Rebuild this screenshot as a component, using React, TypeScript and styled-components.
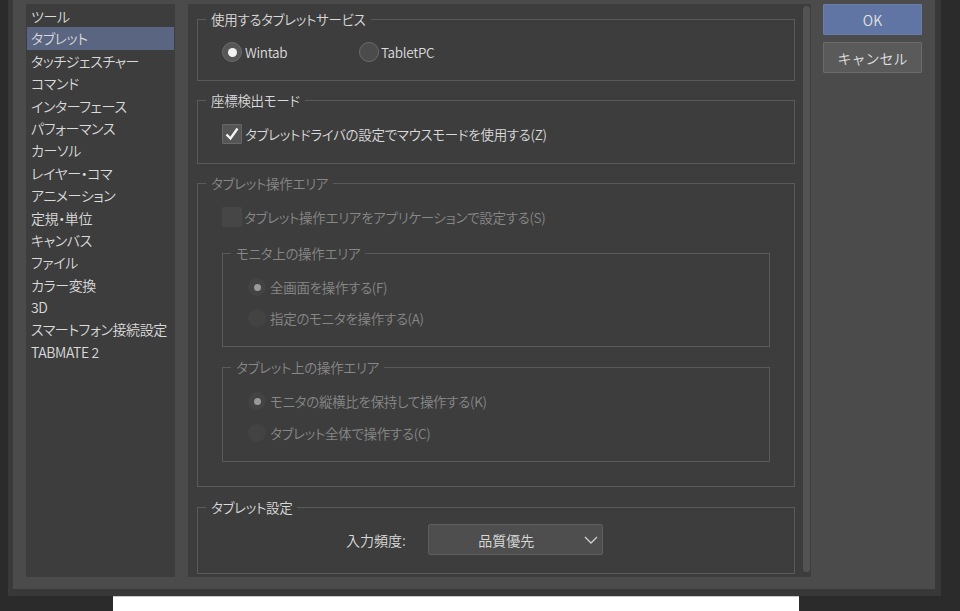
import React from "react";
import styled, { createGlobalStyle } from "styled-components";

const PANEL = "#3d3d3d";
const LINE = "#5a5a5a";
const TEXT = "#dadada";
const DIM = "#888888";

const Global = createGlobalStyle`
  html, body { margin: 0; padding: 0; background: #2b2b2b; overflow: hidden; }
  body {
    font-family: "Noto Sans CJK JP", "Noto Sans", sans-serif;
    font-feature-settings: "palt";
    font-weight: 350;
    -webkit-font-smoothing: antialiased;
  }
  * { box-sizing: border-box; }
`;

const Page = styled.div`
  width: 960px;
  height: 611px;
  display: flex;
  flex-direction: column;
`;

const Window = styled.div`
  margin-left: 8px;
  width: 933px;
  height: 596px;
  flex: none;
  background: #4b4b4b;
  border-left: 5px solid #3a3a3a;
  border-right: 6px solid #383838;
  border-bottom: 7px solid #383838;
  padding: 4px 13px 12px 13px;
  display: flex;
`;

const Sidebar = styled.ul`
  list-style: none;
  margin: 0;
  padding: 1px 0 0;
  width: 149px;
  flex: none;
  background: ${PANEL};
`;

const SideItem = styled.li<{ $active?: boolean }>`
  height: 22.4px;
  line-height: 22.4px;
  margin: 0 1px;
  padding-left: 4px;
  font-size: 14px;
  letter-spacing: -0.4px;
  color: ${TEXT};
  white-space: nowrap;
  background: ${(p) => (p.$active ? "#5a6581" : "transparent")};
`;

const Main = styled.div`
  margin-left: 13px;
  width: 623px;
  flex: none;
  background: ${PANEL};
  display: flex;
  padding: 0 1px 0 9px;
`;

const Content = styled.div`
  width: 598px;
  flex: none;
  padding-top: 15px;
  display: flex;
  flex-direction: column;
`;

const ScrollThumb = styled.div`
  margin: 2px 0 5px 8px;
  width: 7px;
  background: #535353;
  border-radius: 4px;
`;

const Group = styled.div<{ $h: number; $mt: number; $pl: number; $w?: number }>`
  border: 1px solid ${LINE};
  height: ${(p) => p.$h}px;
  margin-top: ${(p) => p.$mt}px;
  padding-left: ${(p) => p.$pl}px;
  width: ${(p) => (p.$w ? `${p.$w}px` : "auto")};
  flex: none;
  display: flex;
  flex-direction: column;
`;

const GroupTitle = styled.div<{ $disabled?: boolean }>`
  width: fit-content;
  margin: -10px 0 0 8px;
  padding: 0 5px;
  background: ${PANEL};
  font-size: 13.5px;
  letter-spacing: -0.3px;
  line-height: 18px;
  color: ${(p) => (p.$disabled ? DIM : TEXT)};
  white-space: nowrap;
`;

const TitleWrap = styled.div<{ $pl: number }>`
  margin-left: ${(p) => -p.$pl}px;
`;

const Row = styled.div<{ $mt: number }>`
  display: flex;
  align-items: center;
  margin-top: ${(p) => p.$mt}px;
  height: 20px;
`;

const Option = styled.label<{ $w?: number; $gap: number; $disabled?: boolean }>`
  display: flex;
  align-items: center;
  gap: ${(p) => p.$gap}px;
  width: ${(p) => (p.$w ? `${p.$w}px` : "auto")};
  font-size: 13.5px;
  letter-spacing: -0.3px;
  color: ${(p) => (p.$disabled ? DIM : TEXT)};
  white-space: nowrap;
`;

const RadioCircle = styled.span<{ $size: number; $checked?: boolean; $disabled?: boolean }>`
  width: ${(p) => p.$size}px;
  height: ${(p) => p.$size}px;
  border-radius: 50%;
  flex: none;
  display: flex;
  align-items: center;
  justify-content: center;
  background: ${(p) => (p.$disabled ? "#434343" : p.$checked ? "#575757" : "#4b4b4b")};
  border: 1px solid ${(p) => (p.$disabled ? "#434343" : "#6a6a6a")};
  &::after {
    content: "";
    display: ${(p) => (p.$checked ? "block" : "none")};
    width: ${(p) => (p.$disabled ? 7 : 9)}px;
    height: ${(p) => (p.$disabled ? 7 : 9)}px;
    border-radius: 50%;
    background: ${(p) => (p.$disabled ? "#999" : "#f2f2f2")};
  }
`;

const CheckBox = styled.span<{ $disabled?: boolean }>`
  width: 20px;
  height: 20px;
  flex: none;
  display: flex;
  align-items: center;
  justify-content: center;
  background: ${(p) => (p.$disabled ? "#464646" : "#555")};
  border: 1px solid ${(p) => (p.$disabled ? "#464646" : "#676767")};
  border-radius: 1px;
`;

const SettingRow = styled.div`
  display: flex;
  align-items: center;
  margin-top: 8px;
  padding-left: 148px;
  gap: 22px;
`;

const FieldLabel = styled.span`
  font-size: 14px;
  color: ${TEXT};
`;

const Select = styled.div`
  width: 175px;
  height: 31px;
  background: #4e4e4e;
  border: 1px solid #5f5f5f;
  border-radius: 2px;
  display: flex;
  align-items: center;
  padding-right: 4px;
  font-size: 14px;
  color: ${TEXT};
`;

const SelectText = styled.span`
  flex: 1;
  text-align: center;
`;

const Buttons = styled.div`
  margin-left: 12px;
  width: 99px;
  flex: none;
  display: flex;
  flex-direction: column;
  gap: 7px;
`;

const Button = styled.button<{ $primary?: boolean }>`
  height: 31px;
  width: 99px;
  margin: 0;
  padding: 0;
  font-family: inherit;
  font-weight: 350;
  font-size: 14px;
  color: #e0e0e0;
  background: ${(p) => (p.$primary ? "#6175a4" : "#5a5a5a")};
  border: 1px solid ${(p) => (p.$primary ? "#6a7dab" : "#6a6a6a")};
  border-radius: 1px;
`;

const WhiteStrip = styled.div`
  margin-left: 113px;
  width: 686px;
  height: 15px;
  flex: none;
  background: #ffffff;
  border-top: 1px solid #c9c9c9;
`;

const items = [
  "ツール",
  "タブレット",
  "タッチジェスチャー",
  "コマンド",
  "インターフェース",
  "パフォーマンス",
  "カーソル",
  "レイヤー・コマ",
  "アニメーション",
  "定規・単位",
  "キャンバス",
  "ファイル",
  "カラー変換",
  "3D",
  "スマートフォン接続設定",
  "TABMATE 2",
];

const Radio: React.FC<{
  label: string;
  checked?: boolean;
  disabled?: boolean;
  size: number;
  gap: number;
  w?: number;
}> = ({ label, checked, disabled, size, gap, w }) => (
  <Option $gap={gap} $w={w} $disabled={disabled}>
    <RadioCircle $size={size} $checked={checked} $disabled={disabled} />
    {label}
  </Option>
);

const Chevron = () => (
  <svg width="14" height="8" viewBox="0 0 14 8" fill="none">
    <polyline points="1,1 7,7 13,1" stroke="#d0d0d0" strokeWidth="1.3" />
  </svg>
);

const Check = () => (
  <svg width="16" height="16" viewBox="0 0 16 16" fill="none">
    <polyline points="2.5,8.5 6.5,12.5 13.5,2.5" stroke="#f4f4f4" strokeWidth="2.4" />
  </svg>
);

export default function App() {
  return (
    <Page>
      <Global />
      <Window>
        <Sidebar>
          {items.map((t) => (
            <SideItem key={t} $active={t === "タブレット"}>
              {t}
            </SideItem>
          ))}
        </Sidebar>
        <Main>
          <Content>
            <Group $h={62} $mt={0} $pl={24}>
              <TitleWrap $pl={24}>
                <GroupTitle>使用するタブレットサービス</GroupTitle>
              </TitleWrap>
              <Row $mt={14}>
                <Radio label="Wintab" checked size={20} gap={3} w={137} />
                <Radio label="TabletPC" size={20} gap={2} />
              </Row>
            </Group>

            <Group $h={64} $mt={19} $pl={24}>
              <TitleWrap $pl={24}>
                <GroupTitle>座標検出モード</GroupTitle>
              </TitleWrap>
              <Row $mt={15}>
                <Option $gap={3}>
                  <CheckBox>
                    <Check />
                  </CheckBox>
                  タブレットドライバの設定でマウスモードを使用する(Z)
                </Option>
              </Row>
            </Group>

            <Group $h={304} $mt={19} $pl={24}>
              <TitleWrap $pl={24}>
                <GroupTitle $disabled>タブレット操作エリア</GroupTitle>
              </TitleWrap>
              <Row $mt={15}>
                <Option $gap={2} $disabled>
                  <CheckBox $disabled />
                  タブレット操作エリアをアプリケーションで設定する(S)
                </Option>
              </Row>

              <Group $h={94} $mt={26} $pl={25} $w={548}>
                <TitleWrap $pl={25}>
                  <GroupTitle $disabled>モニタ上の操作エリア</GroupTitle>
                </TitleWrap>
                <Row $mt={15}>
                  <Radio label="全画面を操作する(F)" checked disabled size={18} gap={4} />
                </Row>
                <Row $mt={11}>
                  <Radio label="指定のモニタを操作する(A)" disabled size={18} gap={4} />
                </Row>
              </Group>

              <Group $h={95} $mt={20} $pl={25} $w={548}>
                <TitleWrap $pl={25}>
                  <GroupTitle $disabled>タブレット上の操作エリア</GroupTitle>
                </TitleWrap>
                <Row $mt={15}>
                  <Radio label="モニタの縦横比を保持して操作する(K)" checked disabled size={18} gap={4} />
                </Row>
                <Row $mt={12}>
                  <Radio label="タブレット全体で操作する(C)" disabled size={18} gap={4} />
                </Row>
              </Group>
            </Group>

            <Group $h={67} $mt={20} $pl={0}>
              <GroupTitle>タブレット設定</GroupTitle>
              <SettingRow>
                <FieldLabel>入力頻度:</FieldLabel>
                <Select>
                  <SelectText>品質優先</SelectText>
                  <Chevron />
                </Select>
              </SettingRow>
            </Group>
          </Content>
          <ScrollThumb />
        </Main>
        <Buttons>
          <Button $primary>OK</Button>
          <Button>キャンセル</Button>
        </Buttons>
      </Window>
      <WhiteStrip />
    </Page>
  );
}
